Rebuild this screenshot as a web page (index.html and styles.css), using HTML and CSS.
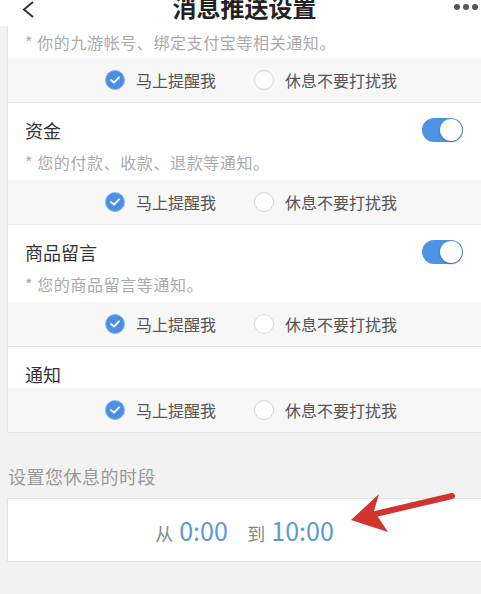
FILE: index.html
```html
<!DOCTYPE html>
<html lang="zh-CN">
<head>
    <title>消息推送设置</title>
    <meta charset="UTF-8">
    <meta name="viewport" content="width=device-width, initial-scale=1.0">
    <link rel="stylesheet" href="styles.css">
</head>
<body>
    <div class="topbar">
        <svg class="back" width="13" height="17" viewBox="0 0 13 17">
            <polyline points="11,1 2,8.5 11,16" fill="none" stroke="#333" stroke-width="2"></polyline>
        </svg>
        <div class="titre">消息推送设置</div>
        <div class="dots"><span></span><span></span><span></span></div>
    </div>

    <div class="liste">
        <div class="section">
            <div class="desc">* 你的九游帐号、绑定支付宝等相关通知。</div>
            <div class="choix">
                <div class="option"><span class="radio on"></span>马上提醒我</div>
                <div class="option"><span class="radio"></span>休息不要打扰我</div>
            </div>
        </div>
        <div class="section">
            <div class="tete"><span>资金</span><span class="switch"></span></div>
            <div class="desc">* 您的付款、收款、退款等通知。</div>
            <div class="choix">
                <div class="option"><span class="radio on"></span>马上提醒我</div>
                <div class="option"><span class="radio"></span>休息不要打扰我</div>
            </div>
        </div>
        <div class="section">
            <div class="tete"><span>商品留言</span><span class="switch"></span></div>
            <div class="desc">* 您的商品留言等通知。</div>
            <div class="choix">
                <div class="option"><span class="radio on"></span>马上提醒我</div>
                <div class="option"><span class="radio"></span>休息不要打扰我</div>
            </div>
        </div>
        <div class="section">
            <div class="tete"><span>通知</span></div>
            <div class="choix">
                <div class="option"><span class="radio on"></span>马上提醒我</div>
                <div class="option"><span class="radio"></span>休息不要打扰我</div>
            </div>
        </div>
    </div>

    <div class="label-repos">设置您休息的时段</div>
    <div class="periode">
        <span class="mot">从</span><span class="heure">0:00</span>
        <span class="mot mot-2">到</span><span class="heure">10:00</span>
        <svg class="fleche" width="120" height="50" viewBox="0 0 120 50">
            <line x1="30" y1="27" x2="111" y2="8" stroke="#d1352d" stroke-width="6" stroke-linecap="round"></line>
            <polygon points="10,32 38,6 33,23 47,44" fill="#d1352d"></polygon>
        </svg>
    </div>
</body>
</html>
```

FILE: styles.css
```css
body {
    margin: 0;
    background-color: #f2f2f2;
    font-family: "Noto Sans CJK SC", "Noto Sans", sans-serif;
    color: #333;
}

/****** BARRE DU HAUT ******/
.topbar {
    display: flex;
    align-items: flex-start;
    height: 26px;
    background-color: #fff;
}
.back {
    margin: 1px 0 0 22px;
}
.titre {
    flex: 1;
    text-align: center;
    font-size: 24px;
    font-weight: 700;
    line-height: 14px;
    color: #222;
}
.dots {
    display: flex;
    gap: 3px;
    margin: 4px 3px 0 0;
}
.dots span {
    width: 6px;
    height: 6px;
    border-radius: 50%;
    background-color: #555;
}

/****** LISTE ******/
.liste {
    margin-left: 7px;
    background-color: #fff;
    border-left: 1px solid #e6e6e6;
}
.section {
    border-bottom: 1px solid #e8e8e8;
}
.tete {
    display: flex;
    justify-content: space-between;
    align-items: center;
    height: 28px;
    padding: 13px 18px 0 17px;
    font-size: 18px;
    color: #333;
}
.desc {
    height: 36px;
    line-height: 36px;
    padding-left: 17px;
    font-size: 16px;
    letter-spacing: 0.6px;
    color: #aaa;
}
.section:first-child .desc {
    height: 32px;
    line-height: 32px;
}
.choix {
    display: flex;
    align-items: center;
    height: 44px;
    padding-left: 97px;
    gap: 38px;
    background-color: #f7f7f7;
    font-size: 16px;
    color: #555;
}
.option {
    display: flex;
    align-items: center;
    gap: 11px;
}
.radio {
    box-sizing: border-box;
    width: 20px;
    height: 20px;
    border-radius: 50%;
    background-color: #fff;
    border: 1.5px solid #d6d6d6;
}
.radio.on {
    border: 1.5px solid #86b5ee;
    background-color: #4a8fe4;
    background-image: url("data:image/svg+xml,%3Csvg xmlns='http://www.w3.org/2000/svg' viewBox='0 0 20 20'%3E%3Cpolyline points='5.5,10 8.8,13 14.5,7' fill='none' stroke='white' stroke-width='2' stroke-linecap='round' stroke-linejoin='round'/%3E%3C/svg%3E");
    background-size: 100% 100%;
}
.switch {
    position: relative;
    width: 41px;
    height: 24px;
    border-radius: 12px;
    background-color: #4e92e6;
}
.switch::after {
    content: "";
    position: absolute;
    top: 1px;
    right: 1px;
    width: 22px;
    height: 22px;
    border-radius: 50%;
    background-color: #fff;
    box-shadow: 0 1px 2px rgba(0, 0, 0, 0.3);
}

/****** PERIODE DE REPOS ******/
.label-repos {
    padding: 28px 0 0 8px;
    line-height: 30px;
    font-size: 18px;
    letter-spacing: 0.5px;
    color: #9a9a9a;
}
.periode {
    position: relative;
    margin: 7px 0 0 7px;
    height: 62px;
    line-height: 62px;
    text-align: center;
    background-color: #fff;
    border: 1px solid #e4e4e4;
    border-right: none;
}
.mot {
    font-size: 18px;
    color: #888;
    margin-right: 6px;
}
.mot-2 {
    margin-left: 16px;
}
.heure {
    font-size: 25px;
    color: #5b9ad6;
}
.fleche {
    position: absolute;
    left: 333px;
    top: -11px;
}
```
